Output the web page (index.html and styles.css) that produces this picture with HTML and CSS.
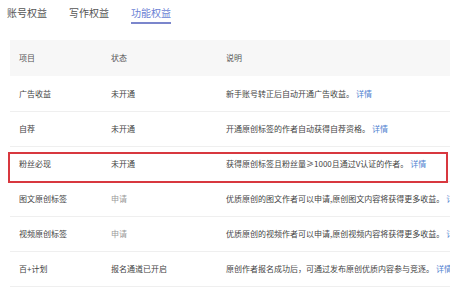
FILE: index.html
```html
<!DOCTYPE html>
<html lang="zh">
<head>
<meta charset="utf-8">
<link rel="stylesheet" href="styles.css">
</head>
<body>
<div class="page">
  <div class="tabs">
    <div class="tab">账号权益</div>
    <div class="tab">写作权益</div>
    <div class="tab active">功能权益</div>
  </div>
  <div class="table">
    <div class="row head">
      <div class="c1">项目</div>
      <div class="c2">状态</div>
      <div class="c3">说明</div>
    </div>
    <div class="row r1">
      <div class="c1">广告收益</div>
      <div class="c2">未开通</div>
      <div class="c3">新手账号转正后自动开通广告收益。<span class="link">详情</span></div>
    </div>
    <div class="row">
      <div class="c1">自荐</div>
      <div class="c2">未开通</div>
      <div class="c3">开通原创标签的作者自动获得自荐资格。<span class="link">详情</span></div>
    </div>
    <div class="row marked">
      <div class="c1">粉丝必现</div>
      <div class="c2">未开通</div>
      <div class="c3">获得原创标签且粉丝量≥1000且通过V认证的作者。<span class="link">详情</span></div>
    </div>
    <div class="row">
      <div class="c1">图文原创标签</div>
      <div class="c2 muted">申请</div>
      <div class="c3">优质原创的图文作者可以申请,原创图文内容将获得更多收益。<span class="link">详情</span></div>
    </div>
    <div class="row">
      <div class="c1">视频原创标签</div>
      <div class="c2 muted">申请</div>
      <div class="c3">优质原创的视频作者可以申请,原创视频内容将获得更多收益。<span class="link">详情</span></div>
    </div>
    <div class="row">
      <div class="c1">百+计划</div>
      <div class="c2">报名通道已开启</div>
      <div class="c3">原创作者报名成功后，可通过发布原创优质内容参与竞逐。<span class="link">详情</span></div>
    </div>
  </div>
</div>
</body>
</html>
```

FILE: styles.css
```css
html, body {
  margin: 0;
  padding: 0;
  background: #ffffff;
  overflow: hidden;
}
body {
  font-family: "Noto Sans CJK SC", "Noto Sans", sans-serif;
  color: #444;
}
.page {
  width: 450px;
  height: 300px;
  overflow: hidden;
}
.tabs {
  display: flex;
  gap: 22px;
  padding-left: 7px;
}
.tab {
  font-size: 10px;
  line-height: 14px;
  padding: 6px 0 2px;
  border-bottom: 2px solid transparent;
  color: #555;
  white-space: nowrap;
}
.tab.active {
  color: #6a7fd4;
  border-bottom-color: #7b86cc;
}
.table {
  margin-top: 16px;
  margin-left: 10px;
  width: 480px;
}
.row {
  display: grid;
  grid-template-columns: 92px 115px 1fr;
  align-items: center;
  height: 35px;
  border-bottom: 1px solid #efefef;
  box-sizing: border-box;
  font-size: 8px;
  line-height: 12px;
  color: #444;
  position: relative;
}
.row > div {
  padding-left: 9px;
  white-space: nowrap;
}
.row.head {
  height: 36px;
  background: #f7f7f7;
  border-bottom: none;
  color: #555;
}
.row.r1 {
  height: 36px;
}
.muted {
  color: #9a9a9a;
}
.link {
  color: #4f7fd0;
  margin-left: 2px;
}
.marked::after {
  content: "";
  position: absolute;
  top: 5px;
  bottom: -2px;
  left: -2px;
  width: 440px;
  border: 2px solid #d8383f;
  box-sizing: border-box;
  pointer-events: none;
}
```
